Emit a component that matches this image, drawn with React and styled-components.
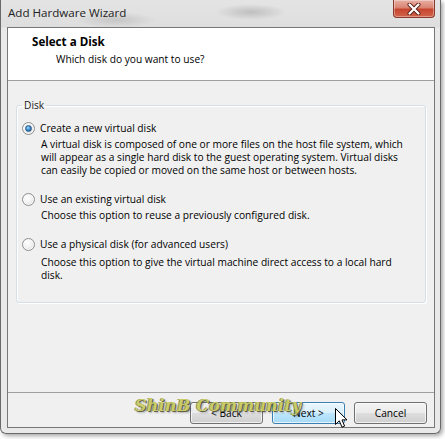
import React from 'react';
import styled, { createGlobalStyle } from 'styled-components';

const Global = createGlobalStyle`
  html, body { margin: 0; padding: 0; background: #ffffff; }
  body { width: 445px; height: 439px; overflow: hidden; font-family: "Open Sans", "Noto Sans", sans-serif; }
  * { box-sizing: border-box; }
`;

const Window = styled.div`
  width: 441px;
  height: 434px;
  border: 1px solid #6a6a6a;
  border-top: none;
  border-radius: 0 0 6px 6px;
  padding: 0 5px 5px 6px;
  display: flex;
  flex-direction: column;
  box-shadow: 2px 2px 4px rgba(0, 0, 0, 0.35);
  background:
    radial-gradient(ellipse 40px 8px at 115px 20px, rgba(120,120,120,0.25), transparent),
    radial-gradient(ellipse 35px 8px at 250px 12px, rgba(110,110,110,0.3), transparent),
    linear-gradient(180deg, #e4e4e4 0px, #dedede 27px, #e9e9e9 28px, #e9e9e9 100%);
`;

const TitleBar = styled.div`
  height: 27px;
  flex: 0 0 27px;
  display: flex;
  justify-content: space-between;
  align-items: flex-start;
`;

const TitleText = styled.span`
  font-size: 11.6px;
  line-height: 15px;
  color: #222;
  padding: 5px 0 0 1px;
`;

const CloseButton = styled.div`
  width: 42px;
  height: 18px;
  border: 1px solid #8a3a2c;
  border-top: none;
  border-radius: 0 0 4px 4px;
  background: linear-gradient(180deg, #e8b0a4 0%, #d98472 45%, #c7452f 55%, #d2644c 100%);
  display: flex;
  align-items: center;
  justify-content: center;
  box-shadow: inset 0 0 0 1px rgba(255,255,255,0.35);
`;

const Client = styled.div`
  flex: 1;
  border: 1px solid #777;
  display: flex;
  flex-direction: column;
  background: #f0f0f0;
`;

const Header = styled.div`
  height: 53px;
  flex: 0 0 53px;
  background: #ffffff;
  border-bottom: 1px solid #a0a0a0;
  padding: 7px 0 0 24px;
`;

const HeaderTitle = styled.div`
  font-weight: 700;
  font-size: 11.6px;
  line-height: 14px;
  color: #000;
`;

const HeaderSub = styled.div`
  font-size: 10.2px;
  line-height: 14px;
  color: #000;
  padding: 3px 0 0 24px;
`;

const Body = styled.div`
  height: 312px;
  flex: 0 0 312px;
  border-bottom: 1px solid #a0a0a0;
  padding: 18px 8px 0 8px;
`;

const Group = styled.fieldset`
  margin: 0;
  height: 204px;
  padding: 8px 4px 0 5px;
  border: 1px solid #d5dfe5;
  border-radius: 3px;
  box-shadow: inset 1px 1px 0 #ffffff, 1px 1px 0 #ffffff;
  display: flex;
  flex-direction: column;
  gap: 14px;
`;

const Legend = styled.legend`
  padding: 0 2px;
  margin-left: 0;
  font-size: 10.2px;
  line-height: 13px;
  color: #1a1a1a;
`;

const Option = styled.div`
  display: flex;
  flex-direction: column;
  gap: ${p => p.$gap}px;
`;

const RadioRow = styled.label`
  display: flex;
  align-items: center;
  gap: 5px;
  height: 16px;
  font-size: 10.2px;
  color: #000;
`;

const Radio = styled.span`
  width: 13px;
  height: 13px;
  border-radius: 50%;
  border: 1px solid #8e8f8f;
  background: radial-gradient(circle at 40% 35%, #ffffff 0%, #f4f4f4 40%, #d6d6d6 100%);
  display: flex;
  align-items: center;
  justify-content: center;
  box-shadow: inset 0 0 0 1px #f8f8f8;
`;

const Dot = styled.span`
  width: 7px;
  height: 7px;
  border-radius: 50%;
  background: radial-gradient(circle at 40% 35%, #a6dbff 0%, #3d91d4 45%, #1b4f7e 100%);
  border: 1px solid #2e5b86;
`;

const Desc = styled.div`
  padding-left: 19px;
  font-size: 10.2px;
  line-height: 13px;
  color: #000;
  padding-right: 10px;
`;

const Footer = styled.div`
  flex: 1;
  position: relative;
  display: flex;
  justify-content: flex-end;
  align-items: flex-start;
  gap: 9px;
  padding: 9px 7px 0 0;
`;

const Button = styled.div`
  width: 73px;
  height: 22px;
  border: 1px solid ${p => (p.$hover ? '#3c7fb1' : '#707070')};
  border-radius: 3px;
  background: ${p =>
    p.$hover
      ? 'linear-gradient(180deg, #eaf6fd 0%, #d9f0fc 50%, #bee6fd 51%, #a7d9f5 100%)'
      : 'linear-gradient(180deg, #f2f2f2 0%, #ebebeb 50%, #dddddd 51%, #cfcfcf 100%)'};
  box-shadow: inset 0 0 0 1px rgba(255, 255, 255, 0.7);
  display: flex;
  align-items: center;
  justify-content: center;
  font-size: 10.2px;
  color: #000;
`;

const Watermark = styled.div`
  position: absolute;
  left: 127px;
  top: 3px;
  font-family: "DejaVu Serif", serif;
  font-weight: 700;
  font-style: italic;
  font-size: 16px;
  letter-spacing: 0.2px;
  color: #c6ca5c;
  text-shadow: 1px 1px 0 #55553a, -1px 0 0 #8a8a5a, 2px 2px 2px rgba(0,0,0,0.3);
  opacity: 0.92;
  pointer-events: none;
`;

const Cursor = styled.svg`
  position: absolute;
  left: 327px;
  top: 15px;
`;

const options = [
  {
    label: 'Create a new virtual disk',
    checked: true,
    desc: 'A virtual disk is composed of one or more files on the host file system, which will appear as a single hard disk to the guest operating system. Virtual disks can easily be copied or moved on the same host or between hosts.',
  },
  {
    label: 'Use an existing virtual disk',
    desc: 'Choose this option to reuse a previously configured disk.',
  },
  {
    label: 'Use a physical disk (for advanced users)',
    desc: 'Choose this option to give the virtual machine direct access to a local hard disk.',
    gap: 4,
  },
];

export default function App() {
  return (
    <>
      <Global />
      <Window>
        <TitleBar>
          <TitleText>Add Hardware Wizard</TitleText>
          <CloseButton>
            <svg width="14" height="12" viewBox="0 0 14 12">
              <path d="M2.5 1.5 L11.5 10.5 M11.5 1.5 L2.5 10.5" stroke="#5a2018" strokeWidth="4" strokeLinecap="round" />
              <path d="M2.5 1.5 L11.5 10.5 M11.5 1.5 L2.5 10.5" stroke="#ffffff" strokeWidth="2.2" strokeLinecap="round" />
            </svg>
          </CloseButton>
        </TitleBar>
        <Client>
          <Header>
            <HeaderTitle>Select a Disk</HeaderTitle>
            <HeaderSub>Which disk do you want to use?</HeaderSub>
          </Header>
          <Body>
            <Group>
              <Legend>Disk</Legend>
              {options.map(o => (
                <Option key={o.label} $gap={o.gap ?? 2}>
                  <RadioRow>
                    <Radio>{o.checked && <Dot />}</Radio>
                    {o.label}
                  </RadioRow>
                  <Desc>{o.desc}</Desc>
                </Option>
              ))}
            </Group>
          </Body>
          <Footer>
            <Button>&lt; Back</Button>
            <Button $hover>Next &gt;</Button>
            <Button>Cancel</Button>
            <Watermark>ShinB Community</Watermark>
            <Cursor width="13" height="21" viewBox="0 0 13 21">
              <path d="M0.5 0.5 L0.5 16.5 L4.3 12.8 L7 19.2 L9.6 18.1 L7 11.9 L12 11.9 Z" fill="#ffffff" stroke="#000000" strokeWidth="1" strokeLinejoin="miter" />
            </Cursor>
          </Footer>
        </Client>
      </Window>
    </>
  );
}
